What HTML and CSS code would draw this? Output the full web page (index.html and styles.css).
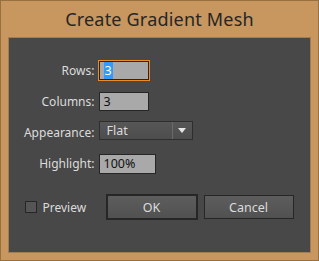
FILE: index.html
```html
<!DOCTYPE html>
<html lang="en">
<head>
  <meta charset="UTF-8"/>
  <title>Create Gradient Mesh</title>
  <link rel="stylesheet" href="styles.css">
</head>
<body>
  <div class="dialog">
    <h1 class="title">Create Gradient Mesh</h1>
    <div class="panel">
      <form class="fields">
        <label for="rows">Rows:</label>
        <div class="field"><span class="input focus"><span class="sel">3</span></span></div>

        <label for="cols">Columns:</label>
        <div class="field"><span class="input">3</span></div>

        <label>Appearance:</label>
        <div class="field">
          <span class="select">
            <span class="select-text">Flat</span>
            <span class="select-arrow"></span>
          </span>
        </div>

        <label for="hl">Highlight:</label>
        <div class="field"><span class="input short">100%</span></div>
      </form>

      <div class="actions">
        <label class="preview"><span class="check"></span>Preview</label>
        <button class="btn default">OK</button>
        <button class="btn">Cancel</button>
      </div>
    </div>
  </div>
</body>
</html>
```

FILE: styles.css
```css
:root {
  --tan:    #c8965f;
  --edge:   #98703f;
  --panel:  #484848;
  --text:   #dcdcdc;
  --field:  #a9a9a9;
  --dark:   #262626;
}
* {
  box-sizing: border-box;
  margin: 0;
  padding: 0;
}
body {
  font-family: "Noto Sans", "DejaVu Sans", sans-serif;
  font-size: 12px;
  background: var(--tan);
}
.dialog {
  width: 319px;
  height: 261px;
  background: var(--tan);
  border: 1px solid var(--edge);
  display: flex;
  flex-direction: column;
  align-items: center;
}
.title {
  height: 36px;
  font-size: 18px;
  font-weight: normal;
  color: #262626;
  line-height: 36px;
  letter-spacing: 0.2px;
}
.panel {
  width: 303px;
  height: 216px;
  margin-left: -1px;
  background: var(--panel);
  border: 1px solid #a27c52;
  display: flex;
  flex-direction: column;
}
.fields {
  display: grid;
  grid-template-columns: 86px auto;
  column-gap: 4px;
  row-gap: 12px;
  padding-top: 23px;
  align-items: center;
}
.fields label {
  text-align: right;
  color: var(--text);
}
.field {
  display: flex;
  height: 19px;
}
.input {
  width: 50px;
  height: 19px;
  background: var(--field);
  border: 1px solid var(--dark);
  color: #111;
  padding-left: 4px;
  line-height: 17px;
  font-size: 12.5px;
}
.input.short {
  width: 57px;
  height: 20px;
}
.input.focus {
  outline: 1px solid #f08a1c;
}
.sel {
  background: #3399ff;
  color: #fff;
  padding: 0 1px;
}
.select {
  width: 94px;
  height: 19px;
  margin-top: -2px;
  border: 1px solid #2e2e2e;
  background: linear-gradient(#575757, #4d4d4d);
  display: flex;
  align-items: center;
  color: var(--text);
  font-size: 12.5px;
}
.select-text {
  flex: 1;
  padding-left: 7px;
}
.select-arrow {
  width: 20px;
  height: 100%;
  border-left: 1px solid #6a6a6a;
  display: flex;
  align-items: center;
  justify-content: center;
}
.select-arrow::after {
  content: "";
  border-left: 4px solid transparent;
  border-right: 4px solid transparent;
  border-top: 5px solid #e6e6e6;
}
.actions {
  display: flex;
  align-items: center;
  padding: 22px 0 0 16px;
}
.preview {
  display: flex;
  align-items: center;
  gap: 6px;
  width: 82px;
  color: var(--text);
}
.check {
  width: 12px;
  height: 12px;
  border: 1px solid var(--dark);
  background: #555;
}
.btn {
  width: 90px;
  height: 24px;
  border: 1px solid var(--dark);
  background: linear-gradient(#5d5d5d, #515151);
  color: var(--text);
  font-family: inherit;
  font-size: 12.5px;
  margin-right: 7px;
}
.btn.default {
  outline: 1px solid var(--dark);
}
```
